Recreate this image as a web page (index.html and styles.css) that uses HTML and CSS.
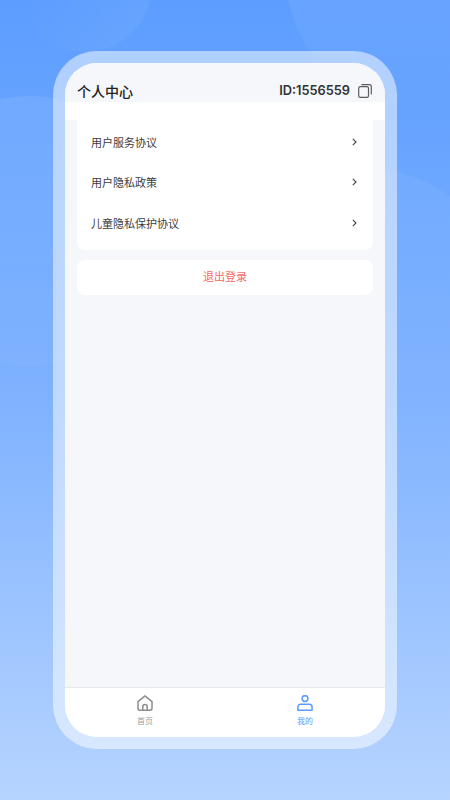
FILE: index.html
```html
<!DOCTYPE html>
<html lang="zh-CN">
<head>
    <meta charset="UTF-8">
    <meta name="viewport" content="width=device-width, initial-scale=1.0">
    <title>个人中心</title>
    <link rel="stylesheet" href="styles.css">
</head>
<body>
    <div class="bg-layer">
        <div class="bg-circle circle-a"></div>
        <div class="bg-circle circle-b"></div>
        <div class="bg-circle circle-c"></div>
        <div class="bg-circle circle-d"></div>
    </div>

    <div class="frame">
        <div class="screen">
            <div class="header">
                <div class="title">个人中心</div>
                <div class="user-id">
                    <span>ID:1556559</span>
                    <svg class="copy-icon" viewBox="0 0 14 14" width="14" height="14" fill="none" stroke="#5c5c5c" stroke-width="1.2">
                        <rect x="0.7" y="2.6" width="9.8" height="10.7" rx="1.6"/>
                        <path d="M3.4 0.7h8a1.9 1.9 0 0 1 1.9 1.9v8"/>
                    </svg>
                </div>
            </div>
            <div class="white-strip"></div>

            <div class="content">
                <div class="card menu">
                    <div class="menu-item">
                        <span>用户服务协议</span>
                        <svg class="arrow" viewBox="0 0 5 8" width="5" height="8" fill="none" stroke="#444" stroke-width="1.1"><path d="M0.8 0.8 4 4 0.8 7.2"/></svg>
                    </div>
                    <div class="menu-item">
                        <span>用户隐私政策</span>
                        <svg class="arrow" viewBox="0 0 5 8" width="5" height="8" fill="none" stroke="#444" stroke-width="1.1"><path d="M0.8 0.8 4 4 0.8 7.2"/></svg>
                    </div>
                    <div class="menu-item">
                        <span>儿童隐私保护协议</span>
                        <svg class="arrow" viewBox="0 0 5 8" width="5" height="8" fill="none" stroke="#444" stroke-width="1.1"><path d="M0.8 0.8 4 4 0.8 7.2"/></svg>
                    </div>
                </div>
                <div class="card logout">退出登录</div>
            </div>

            <div class="tabbar">
                <div class="tab">
                    <svg viewBox="0 0 16 16" width="16" height="16" fill="none" stroke="#8c8c8c" stroke-width="1.5" stroke-linejoin="round">
                        <path d="M1 6.6 8 0.9l7 5.7v6.7a1.9 1.9 0 0 1-1.9 1.9H2.9A1.9 1.9 0 0 1 1 13.3z"/>
                        <path d="M5.8 15.2v-3.4a2.2 2.2 0 0 1 4.4 0v3.4"/>
                    </svg>
                    <span>首页</span>
                </div>
                <div class="tab active">
                    <svg viewBox="0 0 16 16" width="16" height="16" fill="none" stroke="#5b9bfb" stroke-width="1.5">
                        <circle cx="8" cy="3.6" r="2.9"/>
                        <path d="M3.8 9.2h8.4a2.9 2.9 0 0 1 2.9 2.9v3.1H0.9v-3.1a2.9 2.9 0 0 1 2.9-2.9z" stroke-linejoin="round"/>
                    </svg>
                    <span>我的</span>
                </div>
            </div>
        </div>
    </div>
</body>
</html>
```

FILE: styles.css
```css
* {
    box-sizing: border-box;
    margin: 0;
    padding: 0;
}

html, body {
    height: 100%;
}

body {
    position: relative;
    overflow: hidden;
    padding: 51px 53px;
    background: linear-gradient(180deg, #5c9dff 0%, #7fb2ff 50%, #b6d4ff 100%);
    font-family: "Liberation Sans", "Noto Sans CJK SC", sans-serif;
}

.bg-layer {
    position: absolute;
    top: 0;
    left: 0;
    width: 100%;
    height: 100%;
    overflow: hidden;
}

.bg-circle {
    position: absolute;
    border-radius: 50%;
}

.circle-a {
    left: 18px;
    top: -82px;
    width: 134px;
    height: 134px;
    background: linear-gradient(90deg, rgba(255,255,255,0), rgba(255,255,255,0.06));
}

.circle-b {
    left: 285px;
    top: -175px;
    width: 290px;
    height: 290px;
    background: linear-gradient(180deg, rgba(255,255,255,0.07) 60%, rgba(255,255,255,0));
}

.circle-c {
    left: -105px;
    top: 96px;
    width: 270px;
    height: 270px;
    background: linear-gradient(180deg, rgba(255,255,255,0.08), rgba(255,255,255,0.02));
}

.circle-d {
    left: 175px;
    top: 165px;
    width: 350px;
    height: 350px;
    background: linear-gradient(180deg, rgba(255,255,255,0.05), rgba(255,255,255,0));
}

.frame {
    position: relative;
    height: 698px;
    padding: 12px;
    border-radius: 44px;
    background: rgba(255,255,255,0.5);
}

.screen {
    display: flex;
    flex-direction: column;
    height: 100%;
    border-radius: 32px;
    overflow: hidden;
    background: #f5f7fb;
}

.header {
    display: flex;
    justify-content: space-between;
    align-items: center;
    height: 39px;
    padding: 16px 13px 0 12px;
    background: #f5f7fb;
}

.title {
    font-size: 14px;
    font-weight: 500;
    color: #222;
}

.user-id {
    display: flex;
    align-items: center;
    gap: 8px;
    font-family: Inter, "Liberation Sans", sans-serif;
    font-size: 12.8px;
    font-weight: 600;
    color: #333;
}

.white-strip {
    height: 18px;
    background: #fff;
}

.content {
    flex: 1;
    padding: 0 12px;
}

.card {
    background: #fff;
    border-radius: 8px;
}

.menu {
    padding: 2px 16px 6px 14px;
    border-radius: 0 0 8px 8px;
}

.menu-item {
    display: flex;
    justify-content: space-between;
    align-items: center;
    height: 40.5px;
    padding-bottom: 1px;
    font-size: 11px;
    color: #3c3c3c;
}

.logout {
    margin-top: 10px;
    height: 35px;
    line-height: 35px;
    text-align: center;
    font-size: 11px;
    color: #f76a64;
}

.tabbar {
    display: flex;
    height: 50px;
    border-top: 1px solid #e8e8e8;
    background: #fff;
}

.tab {
    flex: 1;
    display: flex;
    flex-direction: column;
    align-items: center;
    padding-top: 7px;
    gap: 4px;
    font-size: 8px;
    color: #a0a0a0;
}

.tab.active {
    color: #5b9bfb;
}
```
